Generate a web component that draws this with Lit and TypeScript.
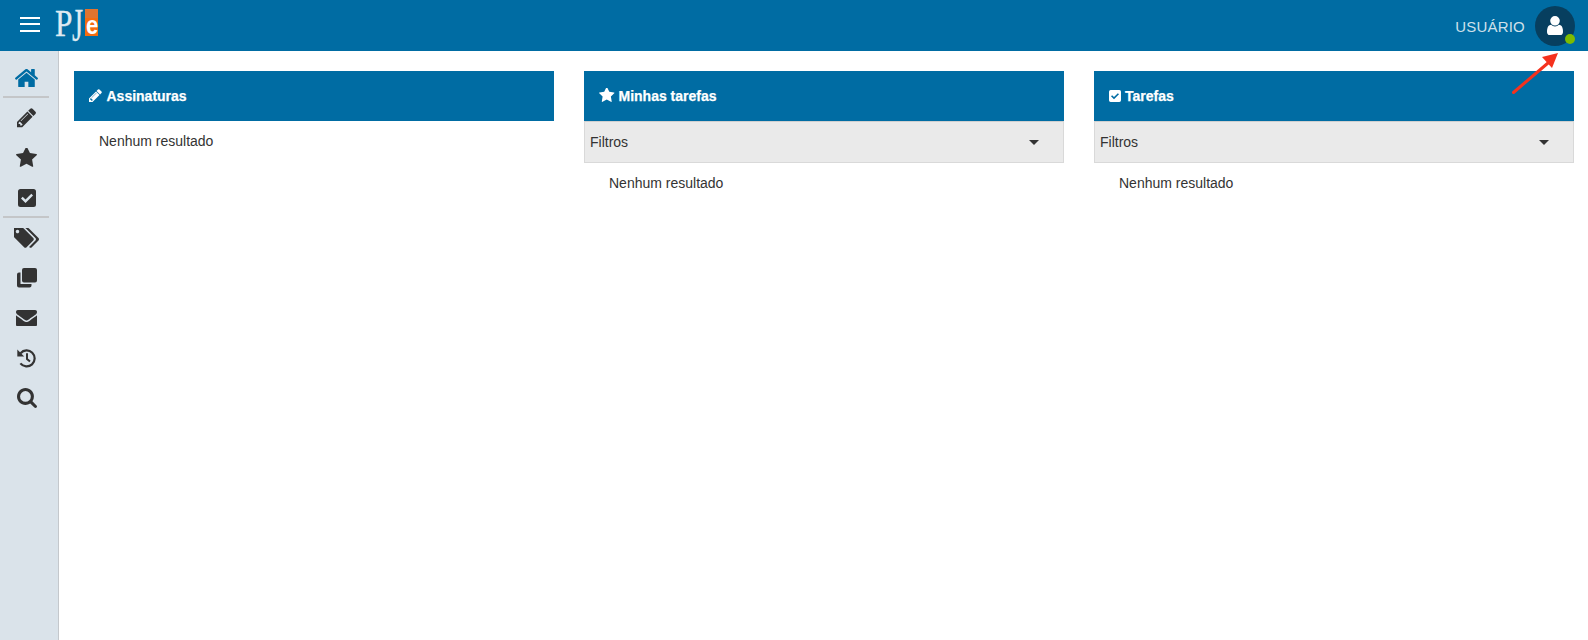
import { LitElement, html, css, svg } from "lit";
import { customElement } from "lit/decorators.js";

type Ic = { x: number; y: number; w: number; h: number; d: string };
const P: Record<string, Ic> = {
  home: { x: 96, y: 256, w: 1600, h: 1280, d: "M1472 992v480q0 26-19 45t-45 19h-384v-384h-256v384h-384q-26 0-45-19t-19-45v-480q0-1 .5-3t.5-3l575-474 575 474q1 2 1 6zm223-69l-62 74q-8 9-21 11h-3q-13 0-21-7l-692-577-692 577q-12 8-24 7-13-2-21-11l-62-74q-8-10-7-23.5t11-21.5l719-599q32-26 76-26t76 26l244 204v-195q0-14 9-23t23-9h192q14 0 23 9t9 23v408l219 182q10 8 11 21.5t-7 23.5z" },
  pencil: { x: 128, y: 128, w: 1600, h: 1536, d: "M491 1536l91-91-235-235-91 91v107h128v128h107zm523-928q0-22-22-22-10 0-17 7l-542 542q-7 7-7 17 0 22 22 22 10 0 17-7l542-542q7-7 7-17zm-54-192l416 416-832 832h-416v-416zm683 96q0 53-37 90l-166 166-416-416 166-165q36-38 90-38 53 0 91 38l235 234q37 39 37 91z" },
  star: { x: 64, y: 128, w: 1664, h: 1600, d: "M1728 647q0 22-26 48l-363 354 86 500q1 7 1 20 0 21-10.5 35.5t-30.5 14.5q-19 0-40-12l-449-236-449 236q-22 12-40 12-21 0-31.5-14.5t-10.5-35.5q0-6 2-20l86-500-364-354q-25-27-25-48 0-37 56-46l502-73 225-455q19-41 49-41t49 41l225 455 502 73q56 9 56 46z" },
  check: { x: 0, y: 0, w: 18, h: 18, d: "M2.5 0h13A2.5 2.5 0 0 1 18 2.5v13a2.5 2.5 0 0 1-2.5 2.5h-13A2.5 2.5 0 0 1 0 15.5v-13A2.5 2.5 0 0 1 2.5 0z M7.5 14 L15 6.5 13.3 4.8 7.5 10.6 4.7 7.8 3 9.5z" },
  tags: { x: 0, y: 192, w: 1835, h: 1408, d: "M384 448q0-53-37.5-90.5t-90.5-37.5-90.5 37.5-37.5 90.5 37.5 90.5 90.5 37.5 90.5-37.5 37.5-90.5zm1067 576q0 53-37 90l-491 492q-39 37-91 37-53 0-90-37l-715-716q-38-37-64.5-101t-26.5-117v-416q0-52 38-90t90-38h416q53 0 117 26.5t102 64.5l715 714q37 39 37 91zm384 0q0 53-37 90l-491 492q-39 37-91 37-36 0-59-14t-53-45l470-470q37-37 37-90 0-52-37-91l-715-714q-38-38-102-64.5t-117-26.5h224q53 0 117 26.5t102 64.5l715 714q37 39 37 91z" },
  clone: { x: 0, y: 0, w: 20, h: 19.5, d: "M7 0h11a2 2 0 0 1 2 2v10.5a2 2 0 0 1-2 2H7a2 2 0 0 1-2-2V2a2 2 0 0 1 2-2z M2 4.5h1.5V16h11v1.5a2 2 0 0 1-2 2H2a2 2 0 0 1-2-2v-11a2 2 0 0 1 2-2z" },
  envelope: { x: 0, y: 256, w: 1792, h: 1408, d: "M1792 710v794q0 66-47 113t-113 47h-1472q-66 0-113-47t-47-113v-794q44 49 101 87 362 246 497 345 57 42 92.5 65.5t94.5 48 110 24.5h2q51 0 110-24.5t94.5-48 92.5-65.5q170-123 498-345 57-39 100-87zm0-294q0 79-49 151t-122 123q-376 261-468 325-10 7-42.5 30.5t-54 38-52 32.5-57.5 27-50 9h-2q-23 0-50-9t-57.5-27-52-32.5-54-38-42.5-30.5q-91-64-262-182.5t-205-142.5q-62-42-117-115.5t-55-136.5q0-78 41.5-130t118.5-52h1472q65 0 112.5 47t47.5 113z" },
  search: { x: 64, y: 128, w: 1664, h: 1664, d: "M1216 832q0-185-131.5-316.5t-316.5-131.5-316.5 131.5-131.5 316.5 131.5 316.5 316.5 131.5 316.5-131.5 131.5-316.5zm512 832q0 52-38 90t-90 38q-54 0-90-38l-343-342q-179 124-399 124-143 0-273.5-55.5t-225-150-150-225-55.5-273.5 55.5-273.5 150-225 225-150 273.5-55.5 273.5 55.5 225 150 150 225 55.5 273.5q0 220-124 399l343 343q37 37 37 90z" },
  user: { x: 256, y: 128, w: 1280, h: 1536, d: "M1536 1399q0 109-62.5 187t-150.5 78h-854q-88 0-150.5-78t-62.5-187q0-85 8.5-160.5t31.5-152 58.5-131 94-89 134.5-34.5q131 128 313 128t313-128q76 0 134.5 34.5t94 89 58.5 131 31.5 152 8.5 160.5zm-256-887q0 159-112.5 271.5t-271.5 112.5-271.5-112.5-112.5-271.5 112.5-271.5 271.5-112.5 271.5 112.5 112.5 271.5z" },
};

function icon(name: string, width: number) {
  const p = P[name];
  return html`<svg class="ic" width=${width} height=${(width * p.h) / p.w} viewBox="${p.x} ${p.y} ${p.w} ${p.h}" fill="currentColor" fill-rule="evenodd">${svg`<path d=${p.d}></path>`}</svg>`;
}

const historyIcon = html`<svg class="ic" width="19" height="20" viewBox="0 0 19 20" fill="none" stroke="currentColor" stroke-width="2.2">
  <path d="M3.6 5.2A8 8 0 1 1 3.4 15.4"></path>
  <path d="M0.3 1.6V8.4H7.2Z" fill="currentColor" stroke="none"></path>
  <path d="M10 5.2V11L13 13.6" stroke-width="2"></path>
</svg>`;

@customElement("app-card")
export class AppCard extends LitElement {
  static properties = { heading: {}, ico: {}, icoWidth: { type: Number }, filter: { type: Boolean } };
  heading = "";
  ico = "";
  icoWidth = 14;
  filter = false;
  static styles = css`
    :host { display: block; width: 480px; }
    .head { height: 50px; background: #006ca3; color: #fff; display: flex; align-items: center; gap: 4px; padding-left: 15px; font-weight: 700; font-size: 14px; padding-bottom: 1px; box-sizing: border-box; -webkit-text-stroke: 0.25px #fff; }
    .ic { display: block; flex: none; }
    .filter { height: 42px; box-sizing: border-box; background: #eaeaea; border: 1px solid #d9d9d9; border-top: 1px solid #d0d0d0; display: flex; align-items: center; justify-content: space-between; padding: 0 24px 0 5px; color: #333; font-size: 14px; }
    .caret { width: 0; height: 0; border-left: 5px solid transparent; border-right: 5px solid transparent; border-top: 5px solid #333; }
    .empty { padding: 10px 0 0 25px; font-size: 14px; line-height: 20px; color: #333; }
  `;
  render() {
    return html`
      <div class="head">${icon(this.ico, this.icoWidth)}<span>${this.heading}</span></div>
      ${this.filter ? html`<div class="filter"><span>Filtros</span><i class="caret"></i></div>` : ""}
      <div class="empty">Nenhum resultado</div>
    `;
  }
}

@customElement("app-root")
export class AppRoot extends LitElement {
  static styles = css`
    :host { display: block; height: 640px; position: relative; overflow: hidden; background: #fff; font-family: "Liberation Sans", Arial, sans-serif; }
    header { height: 51px; background: #006ca3; display: flex; align-items: center; color: #fff; }
    .burger { width: 20px; margin-left: 20px; margin-bottom: 3px; display: flex; flex-direction: column; gap: 4.5px; }
    .burger i { display: block; height: 2px; background: #fff; }
    .logo { margin-left: 15px; align-self: flex-start; margin-top: 5px; height: 42px; display: flex; align-items: flex-start; font-family: "Liberation Serif", serif; color: #dfeaf1; -webkit-text-stroke: 0.3px #dfeaf1; }
    .logo .p { display: block; width: 17px; font-size: 37px; line-height: 37px; transform: scaleX(0.85); transform-origin: left top; }
    .logo .j { display: block; width: 13px; font-size: 46px; line-height: 42px; transform: scaleX(0.62); transform-origin: left top; }
    .logo .e { width: 13px; height: 22px; margin-top: 4px; padding-top: 5px; background: linear-gradient(#e2742f 0 32%, #f56c10 32%); color: #fff; font-family: "Liberation Sans", sans-serif; -webkit-text-stroke: 0; font-size: 26px; line-height: 22px; text-align: center; font-weight: 700; }
    .logo .e span { display: block; transform: scaleX(0.85); }
    .spacer { flex: 1; }
    .user { font-size: 15px; color: #cfe0ea; margin: 2px 10px 0 0; letter-spacing: 0.2px; }
    .avatar { width: 40px; height: 40px; border-radius: 50%; background: #073f5f; margin-right: 13px; position: relative; display: flex; align-items: center; justify-content: center; color: #fff; }
    .dot { position: absolute; width: 10px; height: 10px; border-radius: 50%; background: #7dbb00; right: 0; bottom: 2px; }
    .main { display: flex; height: 589px; }
    aside { width: 58px; flex: none; background: #dae3ea; border-right: 1px solid #c4c8cc; padding-top: 7px; display: flex; flex-direction: column; color: #333; }
    .ic { display: block; flex: none; }
    aside .it { height: 40px; flex: none; padding-right: 5px; display: flex; align-items: center; justify-content: center; }
    aside .it.on { color: #006ca3; }
    aside .sep { height: 2px; margin: -2px 9px 0 3px; background: #c4c6c8; flex: none; }
    .content { flex: 1; display: flex; gap: 30px; padding: 20px 0 0 15px; align-items: flex-start; }
    .arrow { position: absolute; left: 1510px; top: 50px; width: 52px; height: 46px; }
  `;
  render() {
    return html`
      <header>
        <div class="burger"><i></i><i></i><i></i></div>
        <div class="logo"><span class="p">P</span><span class="j">J</span><span class="e"><span>e</span></span></div>
        <div class="spacer"></div>
        <span class="user">USUÁRIO</span>
        <div class="avatar">${icon("user", 16)}<i class="dot"></i></div>
      </header>
      <div class="main">
        <aside>
          <div class="it on">${icon("home", 23)}</div>
          <div class="sep"></div>
          <div class="it">${icon("pencil", 20)}</div>
          <div class="it">${icon("star", 21)}</div>
          <div class="it">${icon("check", 18)}</div>
          <div class="sep"></div>
          <div class="it">${icon("tags", 25)}</div>
          <div class="it">${icon("clone", 20)}</div>
          <div class="it">${icon("envelope", 21)}</div>
          <div class="it">${historyIcon}</div>
          <div class="it">${icon("search", 20)}</div>
        </aside>
        <div class="content">
          <app-card heading="Assinaturas" ico="pencil" icoWidth="13.5"></app-card>
          <app-card heading="Minhas tarefas" ico="star" icoWidth="15.5" filter></app-card>
          <app-card heading="Tarefas" ico="check" icoWidth="12" filter></app-card>
        </div>
      </div>
      <svg class="arrow" viewBox="0 0 52 46"><path d="M3.5 42.5 L38 13" stroke="#f5321e" stroke-width="3" stroke-linecap="round" fill="none"></path><path d="M48 3 L42 18 L32 7 Z" fill="#f5321e"></path></svg>
    `;
  }
}
